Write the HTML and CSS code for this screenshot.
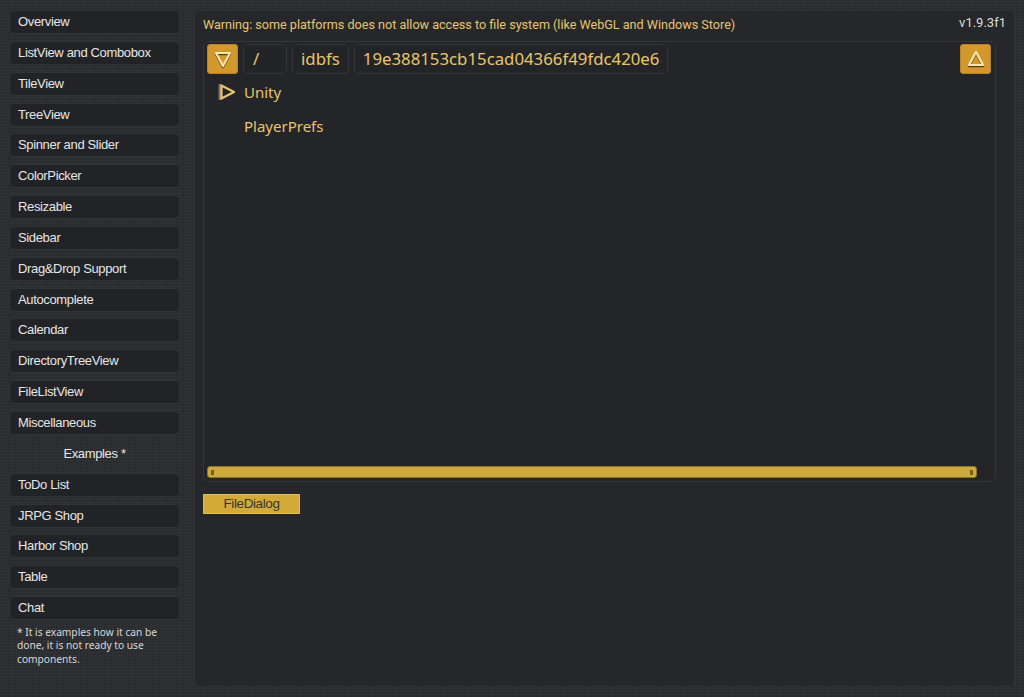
FILE: index.html
```html
<!DOCTYPE html>
<html lang="en">
<head>
    <meta charset="UTF-8">
    <title>UI Widgets - FileDialog</title>
    <link rel="stylesheet" href="styles.css">
</head>
<body>
    <div class="layout">
        <div class="sidebar">
            <div class="nav-btn">Overview</div>
            <div class="nav-btn">ListView and Combobox</div>
            <div class="nav-btn">TileView</div>
            <div class="nav-btn">TreeView</div>
            <div class="nav-btn">Spinner and Slider</div>
            <div class="nav-btn">ColorPicker</div>
            <div class="nav-btn">Resizable</div>
            <div class="nav-btn">Sidebar</div>
            <div class="nav-btn">Drag&amp;Drop Support</div>
            <div class="nav-btn">Autocomplete</div>
            <div class="nav-btn">Calendar</div>
            <div class="nav-btn">DirectoryTreeView</div>
            <div class="nav-btn">FileListView</div>
            <div class="nav-btn">Miscellaneous</div>
            <div class="nav-label">Examples *</div>
            <div class="nav-btn">ToDo List</div>
            <div class="nav-btn">JRPG Shop</div>
            <div class="nav-btn">Harbor Shop</div>
            <div class="nav-btn">Table</div>
            <div class="nav-btn">Chat</div>
            <p class="note">* It is examples how it can be done, it is not ready to use components.</p>
        </div>

        <div class="panel">
            <div class="panel-top">
                <div class="warning">Warning: some platforms does not allow access to file system (like WebGL and Windows Store)</div>
                <div class="version">v1.9.3f1</div>
            </div>

            <div class="file-box">
                <div class="toolbar">
                    <div class="icon-btn">
                        <svg width="20" height="18" viewBox="0 0 20 18">
                            <polygon points="3,3 17,3 10,16" fill="none" stroke="#5a3c0c" stroke-width="2.4" stroke-linejoin="round" transform="translate(0,1)"/>
                            <polygon points="3,3 17,3 10,16" fill="none" stroke="#fbe7b0" stroke-width="2.2" stroke-linejoin="round"/>
                        </svg>
                    </div>
                    <div class="crumb crumb-root">/</div>
                    <div class="crumb">idbfs</div>
                    <div class="crumb">19e388153cb15cad04366f49fdc420e6</div>
                    <div class="spacer"></div>
                    <div class="icon-btn">
                        <svg width="20" height="18" viewBox="0 0 20 18">
                            <polygon points="3,15 17,15 10,2" fill="none" stroke="#5a3c0c" stroke-width="2.4" stroke-linejoin="round" transform="translate(0,1)"/>
                            <polygon points="3,15 17,15 10,2" fill="none" stroke="#fbe7b0" stroke-width="2.2" stroke-linejoin="round"/>
                        </svg>
                    </div>
                </div>

                <div class="tree">
                    <div class="tree-row">
                        <span class="toggle">
                            <svg width="20" height="18" viewBox="0 0 20 18">
                                <rect x="1.5" y="1" width="3.5" height="16" fill="#77777a"/>
                                <polygon points="4.5,2.5 17,9 4.5,15.5" fill="none" stroke="#e8c46a" stroke-width="2.2" stroke-linejoin="round"/>
                            </svg>
                        </span>
                        <span>Unity</span>
                    </div>
                    <div class="tree-row">
                        <span class="toggle"></span>
                        <span>PlayerPrefs</span>
                    </div>
                </div>

                <div class="hscroll">
                    <div class="hscroll-thumb">
                        <span class="grip"></span>
                        <span class="grip"></span>
                    </div>
                </div>
            </div>

            <div class="dialog-btn">FileDialog</div>
        </div>
    </div>
</body>
</html>
```

FILE: styles.css
```css
body {
    margin: 0;
    height: 697px;
    overflow: hidden;
    background-color: #2a2b2f;
    background-image: radial-gradient(#323337 0.9px, transparent 1.1px);
    background-size: 3px 3px;
    font-family: "Noto Sans", "Liberation Sans", sans-serif;
}
.layout {
    display: flex;
    padding: 10px 9px 10px 9px;
    gap: 14px;
    height: 677px;
}

/* left navigation */
.sidebar {
    width: 171px;
    flex-shrink: 0;
    display: flex;
    flex-direction: column;
    gap: 6.85px;
}
.nav-btn {
    height: 24px;
    box-sizing: border-box;
    background: #222327;
    border: 1px solid #323337;
    border-radius: 5px;
    color: #e6e6e6;
    font-family: "Liberation Sans", Arial, sans-serif;
    font-size: 13px;
    letter-spacing: -0.35px;
    line-height: 22px;
    padding-left: 8px;
    white-space: nowrap;
}
.nav-label {
    height: 24px;
    line-height: 24px;
    text-align: center;
    color: #e6e6e6;
    font-family: "Liberation Sans", Arial, sans-serif;
    font-size: 13px;
    letter-spacing: -0.35px;
}
.note {
    margin: -1px 0 0 8px;
    color: #d8d8d8;
    font-size: 10.2px;
    line-height: 13.5px;
    padding-right: 10px;
}

/* main panel */
.panel {
    flex: 1;
    background: #26272b;
    border: 1px solid #303135;
    border-radius: 5px;
    padding: 5px 8px 0 8px;
    box-sizing: border-box;
    height: 677px;
}
.panel-top {
    display: flex;
    justify-content: space-between;
    align-items: flex-start;
    height: 25px;
}
.warning {
    color: #e8c46a;
    font-family: Roboto, "Noto Sans", sans-serif;
    font-size: 12.6px;
    line-height: 18px;
}
.version {
    color: #dcdcdc;
    font-family: Roboto, "Noto Sans", sans-serif;
    font-size: 13px;
    line-height: 14px;
}

.file-box {
    margin-right: 10px;
    height: 441px;
    box-sizing: border-box;
    border: 1px solid #35363a;
    border-radius: 6px;
    background: #242529;
    padding: 2px 4px 3px 3px;
    display: flex;
    flex-direction: column;
}
.toolbar {
    display: flex;
    gap: 5px;
    height: 30px;
}
.spacer {
    flex: 1;
}
.icon-btn {
    width: 31px;
    height: 30px;
    box-sizing: border-box;
    background: #d3982c;
    border: 1px solid #b8832a;
    border-radius: 3px;
    display: flex;
    align-items: center;
    justify-content: center;
}
.crumb {
    height: 30px;
    box-sizing: border-box;
    border: 1px solid #35363a;
    border-radius: 5px;
    background: #232428;
    color: #e8c46a;
    font-size: 16.8px;
    line-height: 28px;
    padding: 0 8px;
}
.crumb-root {
    width: 44px;
    padding-left: 9px;
}

.tree {
    flex: 1;
    padding-top: 1px;
}
.tree-row {
    display: flex;
    align-items: center;
    height: 34px;
    color: #e8c46a;
    font-size: 15px;
}
.toggle {
    width: 26px;
    margin-left: 10px;
    margin-right: 1px;
    display: flex;
    align-items: center;
}

/* horizontal scrollbar */
.hscroll {
    height: 12px;
    padding-right: 14px;
}
.hscroll-thumb {
    height: 12px;
    box-sizing: border-box;
    background: #ccaa3d;
    border: 1px solid #8f7424;
    border-radius: 3px;
    display: flex;
    justify-content: space-between;
    align-items: center;
    padding: 0 3px;
}
.grip {
    width: 3px;
    height: 5px;
    background-image: radial-gradient(#7a5a18 0.7px, transparent 0.9px);
    background-size: 2px 2px;
}

.dialog-btn {
    margin-top: 12px;
    width: 97px;
    height: 20px;
    box-sizing: border-box;
    background: #d2aa37;
    border: 1px solid #e0bd4e;
    color: #3a3630;
    font-family: "Liberation Sans", Arial, sans-serif;
    font-size: 13.5px;
    letter-spacing: -0.4px;
    line-height: 18px;
    text-align: center;
}
```
